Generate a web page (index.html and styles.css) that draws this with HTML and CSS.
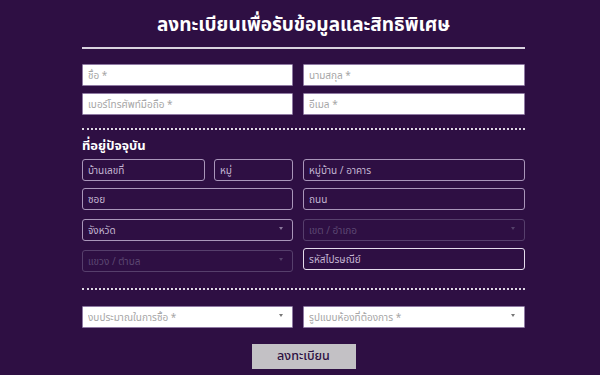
FILE: index.html
```html
<!DOCTYPE html>
<html lang="th">
<head>
  <meta charset="UTF-8">
  <meta name="viewport" content="width=device-width,initial-scale=1.0">
  <title>ลงทะเบียน</title>
  <link rel="stylesheet" href="styles.css">
</head>
<body>
  <form class="reg" autocomplete="off">
    <h1 class="reg-title">ลงทะเบียนเพื่อรับข้อมูลและสิทธิพิเศษ</h1>
    <div class="rule"></div>

    <!-- ข้อมูลส่วนตัว -->
    <div class="grid">
      <input class="field light" type="text" placeholder="ชื่อ *">
      <input class="field light" type="text" placeholder="นามสกุล *">
      <input class="field light" type="tel" placeholder="เบอร์โทรศัพท์มือถือ *">
      <input class="field light" type="email" placeholder="อีเมล *">
    </div>

    <div class="dots"></div>
    <h2 class="sec">ที่อยู่ปัจจุบัน</h2>

    <!-- ที่อยู่ -->
    <div class="grid">
      <div class="split">
        <input class="field dark" type="text" placeholder="บ้านเลขที่">
        <input class="field dark" type="text" placeholder="หมู่">
      </div>
      <input class="field dark" type="text" placeholder="หมู่บ้าน / อาคาร">
      <input class="field dark" type="text" placeholder="ซอย">
      <input class="field dark" type="text" placeholder="ถนน">
      <div class="sel dark">
        <select class="field dark"><option>จังหวัด</option></select>
      </div>
      <div class="sel dark off">
        <select class="field dark" disabled><option>เขต / อำเภอ</option></select>
      </div>
      <div class="sel dark off">
        <select class="field dark" disabled><option>แขวง / ตำบล</option></select>
      </div>
      <input class="field dark bright" type="text" placeholder="รหัสไปรษณีย์">
    </div>

    <div class="dots dots-low"></div>

    <div class="grid">
      <div class="sel light">
        <select class="field light"><option>งบประมาณในการซื้อ *</option></select>
      </div>
      <div class="sel light">
        <select class="field light"><option>รูปแบบห้องที่ต้องการ *</option></select>
      </div>
    </div>

    <button type="submit" class="submit">ลงทะเบียน</button>
  </form>
</body>
</html>
```

FILE: styles.css
```css
:root {
  --bg: #2e0f43;
  --line: #d9d3df;
  --border: #a996ba;
  --border-off: #563f6c;
  --text-dark: #c4b6d2;
  --text-off: #5c4772;
  --ph-light: #a6a6a6;
  --radius: 3px;
}
html, body {
  margin: 0; padding: 0;
  background: var(--bg);
  font-family: 'Noto Sans', 'Noto Sans Thai', 'DejaVu Sans', sans-serif;
  color: #fff;
}
.reg {
  width: 443px;
  margin: 0 0 0 82px;
  padding-top: 10px;
  display: flex;
  flex-direction: column;
}
.reg-title {
  margin: 0;
  font-size: 19px;
  line-height: 28px;
  font-weight: 700;
  text-align: center;
}
.rule {
  height: 2px;
  background: var(--line);
  margin: 9px 0 15px 0;
}
.grid {
  display: grid;
  grid-template-columns: 211px 222px;
  column-gap: 10px;
  row-gap: 7px;
}
.split {
  display: grid;
  grid-template-columns: 123px 1fr;
  gap: 9px;
}
.field {
  box-sizing: border-box;
  width: 100%;
  height: 22px;
  margin: 0;
  padding: 0 5px;
  font-family: inherit;
  font-size: 10px;
  font-weight: 400;
  outline: none;
  appearance: none;
  -webkit-appearance: none;
}
.field.light {
  background: #fff;
  border: 1px solid #8f7aa3;
  border-radius: 1px;
  color: var(--ph-light);
}
.field.light::placeholder { color: var(--ph-light); }
.field.dark {
  background: transparent;
  border: 1px solid var(--border);
  border-radius: var(--radius);
  color: var(--text-dark);
}
.field.dark::placeholder { color: var(--text-dark); }
.field.bright { border-color: #e4dcec; }
.sel { position: relative; }
.sel select { padding-right: 18px; cursor: pointer; }
.sel::after {
  content: '';
  position: absolute;
  right: 10px; top: 10px;
  border-left: 2.5px solid transparent;
  border-right: 2.5px solid transparent;
  border-top: 3px solid #777;
  pointer-events: none;
}
.sel.dark::after { border-top-color: #8a789c; }
.sel.off::after { border-top-color: #54406a; }
.sel.off select {
  border-color: var(--border-off);
  color: var(--text-off);
  opacity: 1;
}
.dots {
  height: 0;
  border-top: 2px dotted #ddd6e4;
  margin: 13px 0 6px 0;
}
.dots-low { margin: 16px 0 14px 0; }
.sec {
  margin: 0 0 5px 0;
  font-size: 13px;
  line-height: 18px;
  font-weight: 700;
}
.submit {
  align-self: center;
  margin: 16px 0 0 0;
  width: 104px;
  height: 25px;
  border: none;
  background: #c3c1c5;
  color: #2e1042;
  font-family: inherit;
  font-size: 12.5px;
  font-weight: 500;
  cursor: pointer;
}
.submit:hover { background: #d3d1d5; }
```
